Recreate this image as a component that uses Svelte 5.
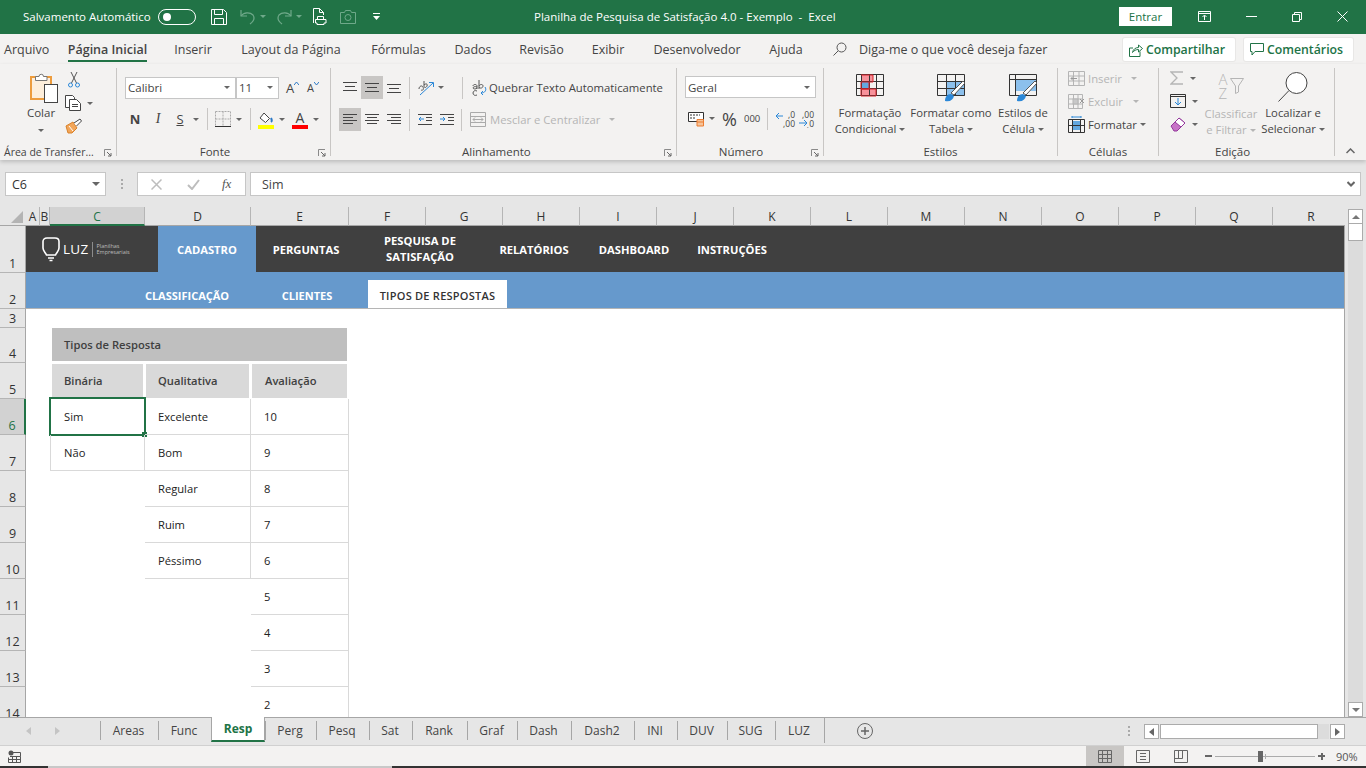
<script>
	const tabs = [
		{ label: 'Arquivo', w: 54 },
		{ label: 'Página Inicial', w: 107, active: true },
		{ label: 'Inserir', w: 64 },
		{ label: 'Layout da Página', w: 132 },
		{ label: 'Fórmulas', w: 83 },
		{ label: 'Dados', w: 66 },
		{ label: 'Revisão', w: 71 },
		{ label: 'Exibir', w: 62 },
		{ label: 'Desenvolvedor', w: 116 },
		{ label: 'Ajuda', w: 62 }
	];

	const columns = [
		{ l: 'A', w: 14 }, { l: 'B', w: 10 }, { l: 'C', w: 95, sel: true }, { l: 'D', w: 106 }, { l: 'E', w: 98 },
		...'FGHIJKLMNOPQR'.split('').map((l) => ({ l, w: 77 }))
	];

	const rows = [47, 36, 19, 35, 36, 36, 36, 36, 36, 36, 36, 36, 36, 36];

	const navItems = [
		{ label: 'CADASTRO', w: 98, active: true },
		{ label: 'PERGUNTAS', w: 100 },
		{ label: 'PESQUISA DE SATISFAÇÃO', w: 128, wrap: true },
		{ label: 'RELATÓRIOS', w: 100 },
		{ label: 'DASHBOARD', w: 100 },
		{ label: 'INSTRUÇÕES', w: 96 }
	];

	const binaria = ['Sim', 'Não'];
	const qualitativa = ['Excelente', 'Bom', 'Regular', 'Ruim', 'Péssimo'];
	const avaliacao = [10, 9, 8, 7, 6, 5, 4, 3, 2];

	const sheets = [
		{ n: 'Areas', w: 58 }, { n: 'Func', w: 53 }, { n: 'Resp', w: 54, active: true }, { n: 'Perg', w: 51 },
		{ n: 'Pesq', w: 53 }, { n: 'Sat', w: 43 }, { n: 'Rank', w: 55 }, { n: 'Graf', w: 50 }, { n: 'Dash', w: 54 },
		{ n: 'Dash2', w: 63 }, { n: 'INI', w: 43 }, { n: 'DUV', w: 50 }, { n: 'SUG', w: 48 }, { n: 'LUZ', w: 49 }
	];
</script>

{#snippet launcher()}
	<svg class="launcher" width="8" height="8" viewBox="0 0 8 8"><path d="M.5 7V.5H7" fill="none" stroke="#8a8a8a" /><path d="M3 3l4 4M7 4v3H4" fill="none" stroke="#666" /></svg>
{/snippet}

<div class="app">
	<header class="titlebar">
		<div class="qat">
			<span class="autosave">Salvamento Automático</span>
			<span class="toggle"><i></i></span>
			<svg class="q-save" width="16" height="16" viewBox="0 0 16 16" fill="none" stroke="#fff"><path d="M.5.5h12l3 3v12H.5z" /><path d="M3.5.5v5h8v-5M3.5 15.5v-6h9v6" /></svg>
			<svg class="q-undo" width="16" height="16" viewBox="0 0 16 16" fill="none" stroke="#6fa98a" stroke-width="1.2"><path d="M1 1v6h6" /><path d="M1 7c3-4 9-4 12-1 2 3 1 6-3 9" /></svg>
			<span class="caret dim q-c"></span>
			<svg class="q-redo" width="16" height="16" viewBox="0 0 16 16" fill="none" stroke="#6fa98a" stroke-width="1.2"><path d="M15 1v6H9" /><path d="M15 7C12 3 6 3 3 6c-2 3-1 6 3 9" /></svg>
			<span class="caret dim q-c"></span>
			<svg class="q-print" width="15" height="17" viewBox="0 0 15 17" fill="none" stroke="#fff"><path d="M.5 15V.5h6l4 4V7" /><path d="M6.5.5v4h4" /><path d="M4.5 8.5h6v3h-6zM2.5 11.5h10.5v3.5h-2v1.5h-7V15h-1.5z" fill="#217346" /></svg>
			<svg class="q-cam" width="16" height="14" viewBox="0 0 16 14" fill="none" stroke="#6fa98a"><path d="M.5 2.5h4l1-2h5l1 2h4v11H.5z" /><circle cx="8" cy="7.5" r="3" /></svg>
			<svg class="q-more" width="7" height="7" viewBox="0 0 7 7" fill="#fff"><path d="M0 0h7v1H0zM0 3h7L3.5 7z" /></svg>
		</div>
		<div class="doc-title">Planilha de Pesquisa de Satisfação 4.0 - Exemplo &nbsp;-&nbsp; Excel</div>
		<button class="signin">Entrar</button>
		<div class="winbtns">
			<svg width="13" height="11" viewBox="0 0 13 11" fill="none" stroke="#fff"><path d="M.5.5h12v10H.5zM.5 2.5h12M6.5 9V4.500M4.500 6l2-2 2 2" /></svg>
			<svg width="11" height="1" viewBox="0 0 11 1"><path d="M0 .5h11" stroke="#fff" /></svg>
			<svg width="10" height="10" viewBox="0 0 10 10" fill="none" stroke="#fff"><path d="M.5 2.500h7v7h-7zM2.500 2.500v-2h7v7h-2" /></svg>
			<svg width="11" height="11" viewBox="0 0 11 11" fill="none" stroke="#fff"><path d="M.5.500l10 10M10.500.500l-10 10" /></svg>
		</div>
	</header>

	<nav class="tabrow">
		{#each tabs as t}
			<span class="tab" class:active={t.active} style="width:{t.w}px"><span>{t.label}</span></span>
		{/each}
		<svg class="search" width="14" height="14" viewBox="0 0 14 14" fill="none" stroke="#555"><circle cx="8.500" cy="5.500" r="4.500" /><path d="M5 9l-4.500 4.500" /></svg>
		<span class="tell">Diga-me o que você deseja fazer</span>
		<button class="pill share">
			<svg width="14" height="14" viewBox="0 0 14 14" fill="none" stroke="#217346"><path d="M11 8.500v5H.5V5H4" /><path d="M3.500 9.500C4 6 7 4.500 9.500 4.500V2l4 3.500-4 3.500V6.500C7 6.500 5 7.500 3.500 9.500z" /></svg>
			Compartilhar
		</button>
		<button class="pill comment">
			<svg width="14" height="13" viewBox="0 0 14 13" fill="none" stroke="#217346"><path d="M.5.500h13v8H5l-3 3.500v-3.500H.5z" /></svg>
			Comentários
		</button>
	</nav>

	<section class="ribbon">
		<div class="group g-clip">
			<div class="body clip-body">
				<div class="paste">
					<svg width="28" height="32" viewBox="0 0 28 32"><rect x="1" y="5" width="20" height="22" fill="#fdeedb" stroke="#ed9c3d" stroke-width="2" /><path d="M5.500 8.500v-4h3.500a2.200 2.200 0 0 1 4.500 0h3.500v4z" fill="#fff" stroke="#777" /><rect x="14.500" y="12.500" width="13" height="18" fill="#fff" stroke="#444" /></svg>
					<span class="lbl">Colar</span>
					<span class="caret"></span>
				</div>
				<div class="clip-tools">
					<svg class="i-cut" width="12" height="16" viewBox="0 0 12 16" fill="none"><path d="M3 0l5.500 11M9 0L3.500 11" stroke="#555" /><circle cx="2.500" cy="13" r="2" stroke="#2b88d8" /><circle cx="9.500" cy="13" r="2" stroke="#2b88d8" /></svg>
					<div class="withcaret">
						<svg width="16" height="16" viewBox="0 0 16 16" fill="#fff" stroke="#444"><path d="M.5.500h7l2 2v10H.5z" /><path d="M4.500 4.500h7l4 4v7h-11z" /><path d="M7 9.500h6M7 11.500h6" /></svg>
						<span class="caret"></span>
					</div>
					<svg width="17" height="16" viewBox="0 0 17 16"><path d="M1 8l7-4 4 6-5 5H3z" fill="#f2a65a" stroke="#d9822b" /><path d="M4 8l4 5" stroke="#fff" /><path d="M9 5l6-4 1.500 2-5 5" fill="#fff" stroke="#444" /></svg>
				</div>
			</div>
			<div class="glabel gl-clip"><span>Área de Transfer...</span>{@render launcher()}</div>
		</div>
		<div class="sep"></div>

		<div class="group g-font">
			<div class="body font-body">
				<div class="frow">
					<div class="select s-font"><span>Calibri</span><span class="caret"></span></div>
					<div class="select s-size"><span>11</span><span class="caret"></span></div>
					<span class="grow-a">A<svg width="5" height="3" viewBox="0 0 5 3"><path d="M0 3l2.500-3L5 3" fill="none" stroke="#2b78c5" /></svg></span>
					<span class="grow-a small">A<svg width="5" height="3" viewBox="0 0 5 3"><path d="M0 0l2.500 3L5 0" fill="none" stroke="#2b78c5" /></svg></span>
				</div>
				<div class="frow second">
					<b class="fmt">N</b>
					<i class="fmt it">I</i>
					<u class="fmt und">S</u>
					<span class="caret c-s"></span>
					<span class="vsep v-a"></span>
					<svg class="i-border" width="16" height="16" viewBox="0 0 16 16" fill="none" stroke="#aaa" stroke-dasharray="2 1"><path d="M.5.500h15v15M.5.500v15M8 .500v15M.5 8h15" /><path d="M0 15.500h16" stroke="#333" stroke-dasharray="none" /></svg>
					<span class="caret c-b"></span>
					<span class="vsep v-b"></span>
					<div class="colorbtn c-fill">
						<svg width="14" height="13" viewBox="0 0 14 13" fill="none"><path d="M5 1l5.500 5.500-4 4L1 6z" stroke="#444" fill="#fff" /><path d="M12 6c1 2 1.500 3 0 4" stroke="#2b78c5" stroke-width="2" /></svg>
						<span class="bar yellow"></span>
					</div>
					<span class="caret c-f"></span>
					<div class="colorbtn c-color">
						<span class="fc-a">A</span>
						<span class="bar red"></span>
					</div>
					<span class="caret c-f2"></span>
				</div>
			</div>
			<div class="glabel gl-font"><span>Fonte</span>{@render launcher()}</div>
		</div>
		<div class="sep"></div>

		<div class="group g-align">
			<div class="body align-body">
				<div class="arow">
					<span class="albtn">
						<svg width="14" height="11" viewBox="0 0 14 11" stroke="#444"><path d="M0 .500h14M2 4.500h10M0 8.500h14" opacity="1" /></svg>
					</span>
					<span class="albtn on">
						<svg width="14" height="11" viewBox="0 0 14 11" stroke="#444"><path d="M0 1.500h14M2 5.500h10M0 9.500h14" /></svg>
					</span>
					<span class="albtn">
						<svg width="14" height="11" viewBox="0 0 14 11" stroke="#444"><path d="M0 2.500h14M2 6.500h10M0 10.500h14" /></svg>
					</span>
					<span class="vsep a-v1"></span>
					<svg class="i-orient" width="17" height="16" viewBox="0 0 17 16" fill="none"><path d="M1 9c0-3 3-4 4-2s0 4-2 3M6 6V1m0 4c2-2 4-1 3 1s-3 2-3 0" stroke="#555" /><path d="M2 15L15 3M11 2.500h4.500V7" stroke="#2b88d8" /></svg>
					<span class="caret c-or"></span>
					<span class="vsep a-v2"></span>
					<svg class="i-wrap" width="15" height="16" viewBox="0 0 15 16" fill="none"><path d="M1 6c0-2 4-2 4 0v3M5 7C3 6 1 7 1 8s3 1.500 4 0M7 0v9m0-3c1-2 4-2 4 0s-3 3-4 1M5 11c-2-1-4 0-4 2s2 3 4 2" stroke="#555" /><path d="M13 7c2 3 0 6-4 6M11 11l-2 2 2 2" stroke="#2b88d8" /></svg>
					<span class="atext">Quebrar Texto Automaticamente</span>
				</div>
				<div class="arow second">
					<span class="albtn on">
						<svg width="14" height="11" viewBox="0 0 14 11" stroke="#444"><path d="M0 .500h14M0 3.500h10M0 6.500h14M0 9.500h10" /></svg>
					</span>
					<span class="albtn">
						<svg width="14" height="11" viewBox="0 0 14 11" stroke="#444"><path d="M0 .500h14M2 3.500h10M0 6.500h14M2 9.500h10" /></svg>
					</span>
					<span class="albtn">
						<svg width="14" height="11" viewBox="0 0 14 11" stroke="#444"><path d="M0 .500h14M4 3.500h10M0 6.500h14M4 9.500h10" /></svg>
					</span>
					<span class="vsep a-v3"></span>
					<svg class="i-ind1" width="14" height="11" viewBox="0 0 14 11" fill="none"><path d="M0 .500h14M8 3.500h6M8 6.500h6M0 10.500h14" stroke="#444" /><path d="M6 5H1M3 3L1 5l2 2" stroke="#2b88d8" /></svg>
					<svg class="i-ind2" width="14" height="11" viewBox="0 0 14 11" fill="none"><path d="M0 .500h14M8 3.500h6M8 6.500h6M0 10.500h14" stroke="#444" /><path d="M0 5h5M3 3l2 2-2 2" stroke="#2b88d8" /></svg>
					<span class="vsep a-v4"></span>
					<svg class="i-merge" width="16" height="15" viewBox="0 0 16 15" fill="none" stroke="#aaa"><path d="M.5.500h15v14H.5zM.5 4.500h15M.5 10.500h15M3 7.500h10M5 5.500l-2 2 2 2M11 5.500l2 2-2 2" /></svg>
					<span class="atext dimmed">Mesclar e Centralizar</span>
					<span class="caret dimc c-m"></span>
				</div>
			</div>
			<div class="glabel gl-align"><span>Alinhamento</span>{@render launcher()}</div>
		</div>
		<div class="sep"></div>

		<div class="group g-num">
			<div class="body num-body">
				<div class="select s-num"><span>Geral</span><span class="caret"></span></div>
				<div class="nrow">
					<svg class="i-acc" width="16" height="17" viewBox="0 0 16 17" fill="none"><path d="M.5 2.500h15v9H.5z" stroke="#333" fill="#fff" /><path d="M2 5h10M2 8h6" stroke="#333" stroke-dasharray="2 1" /><path d="M9 9.500h6.500v6.500H9z" fill="#f6c49a" stroke="#ed7d31" /><path d="M9 12h6.500" stroke="#ed7d31" /></svg>
					<span class="caret c-acc"></span>
					<span class="pct">%</span>
					<span class="thou">000</span>
					<span class="vsep n-v"></span>
					<span class="dec">
						<svg width="8" height="16" viewBox="0 0 8 16" fill="none"><path d="M8 5H1M4 2L1 5l3 3" stroke="#2b88d8" /></svg>
						<span class="dec-text"><span>,0</span><span>,00</span></span>
					</span>
					<span class="dec d2">
						<span class="dec-text right"><span>,00</span><span>,0</span></span>
						<svg class="over" width="10" height="8" viewBox="0 0 10 8" fill="none"><path d="M0 4h8M5 1l3 3-3 3" stroke="#2b88d8" /></svg>
					</span>
				</div>
			</div>
			<div class="glabel gl-num"><span>Número</span>{@render launcher()}</div>
		</div>
		<div class="sep"></div>

		<div class="group g-styles">
			<div class="body styles-body">
				<div class="bigbtn b-cond">
					<svg width="28" height="28" viewBox="0 0 28 28" fill="none"><rect x="5" y="1" width="12" height="7" fill="#f7919a" /><rect x="5" y="15" width="15" height="7" fill="#f7919a" /><rect x="5" y="8" width="8" height="7" fill="#63a8e0" /><path d="M.5.500h27v21h-27zM.5 7.500h27M.5 14.500h27M5.500.500v21M13.500.500v21M20.500.500v21" stroke="#333" /><path d="M5 8h12M5 1h12v7M5 15h15v7H5zM5 8v7h8V8" stroke="#d8232a" /></svg>
					<span class="lbl">Formatação<br />Condicional<i class="caret inl"></i></span>
				</div>
				<div class="bigbtn b-table">
					<svg width="28" height="28" viewBox="0 0 28 28" fill="none"><rect x="10" y="8" width="18" height="14" fill="#8cc0ec" /><path d="M.5.500h27v21h-27zM.5 7.500h27M.5 14.500h27M9.500.500v21M18.500.500v21" stroke="#333" /><path d="M14 19l12-12 2 2-11 12z" fill="#fff" stroke="#555" /><path d="M8 27c0-4 2-7 6-7l3 2c-1 4-4 6-9 5z" fill="#2b88d8" /></svg>
					<span class="lbl">Formatar como<br />Tabela<i class="caret inl"></i></span>
				</div>
				<div class="bigbtn b-cell">
					<svg width="28" height="28" viewBox="0 0 28 28" fill="none"><rect x="6" y="5" width="21" height="12" fill="#8cc0ec" /><path d="M.5.500h27v21h-27zM.5 5.500h27M6.500.500v21" stroke="#333" /><path d="M14 19l12-12 2 2-11 12z" fill="#fff" stroke="#555" /><path d="M8 27c0-4 2-7 6-7l3 2c-1 4-4 6-9 5z" fill="#2b88d8" /></svg>
					<span class="lbl">Estilos de<br />Célula<i class="caret inl"></i></span>
				</div>
			</div>
			<div class="glabel"><span>Estilos</span></div>
		</div>
		<div class="sep"></div>

		<div class="group g-cells">
			<div class="body cells-body">
				<div class="crow dimmed">
					<svg width="17" height="15" viewBox="0 0 17 15" fill="none" stroke="#b5b5b5"><path d="M.5.500h16v14H.5zM.5 5h16M.5 10h16M5.500.500v14M11 .500v14" /><path d="M9 7.500H3M5 5.500l-2 2 2 2" stroke="#999" /></svg>
					<span class="ctext">Inserir</span><span class="caret dimc c-ins"></span>
				</div>
				<div class="crow dimmed">
					<svg width="17" height="15" viewBox="0 0 17 15" fill="none" stroke="#b5b5b5"><path d="M.5.500h14v14H.5zM.5 5h14M.5 10h14M5.500.500v14M10 .500v14" /><rect x="5" y="5" width="5" height="5" fill="#c8c8c8" /><path d="M12 5l4 4M16 5l-4 4" stroke="#999" /></svg>
					<span class="ctext">Excluir</span><span class="caret dimc c-exc"></span>
				</div>
				<div class="crow">
					<svg width="17" height="17" viewBox="0 0 17 17" fill="none"><rect x="4" y="5" width="9" height="9" fill="#63a8e0" /><path d="M.5 3.500h16v13H.5zM.5 9.500h16M4.500 3.500v13M12.500 3.500v13" stroke="#333" /><path d="M4 1h9M4 0v2M13 0v2" stroke="#2b88d8" /></svg>
					<span class="ctext">Formatar</span><span class="caret c-fmt"></span>
				</div>
			</div>
			<div class="glabel"><span>Células</span></div>
		</div>
		<div class="sep"></div>

		<div class="group g-edit">
			<div class="body edit-body">
				<div class="edit-tools">
					<div class="withcaret">
						<svg width="14" height="14" viewBox="0 0 14 14" fill="none" stroke="#b5b5b5" stroke-width="1.300"><path d="M13 1H1l6 6-6 6h12" /></svg>
						<span class="caret"></span>
					</div>
					<div class="withcaret">
						<svg width="16" height="14" viewBox="0 0 16 14" fill="none"><path d="M.5.500h15v13H.5z" stroke="#333" /><path d="M.5 2.500h15" stroke="#333" /><path d="M8 4v7M5 8l3 3 3-3" stroke="#2b88d8" /></svg>
						<span class="caret"></span>
					</div>
					<div class="withcaret">
						<svg width="16" height="15" viewBox="0 0 16 15"><path d="M1 9l8-8 6 5-8 8H4z" fill="#c774c7" stroke="#93379b" /><path d="M5 5l6 5 4-4-6-5z" fill="#fff" stroke="#93379b" /></svg>
						<span class="caret"></span>
					</div>
				</div>
				<div class="bigbtn b-sort dimmed">
					<div class="sort-ic">
						<span class="az"><span>A</span><span>Z</span></span>
						<svg width="14" height="16" viewBox="0 0 14 16" fill="none" stroke="#b5b5b5"><path d="M.5 .500h13L8.500 8v6l-3 1.500V8z" /></svg>
					</div>
					<span class="lbl">Classificar<br />e Filtrar<i class="caret inl dimc"></i></span>
				</div>
				<div class="bigbtn b-find">
					<svg width="30" height="30" viewBox="0 0 30 30" fill="none" stroke="#444"><circle cx="18.500" cy="11" r="10.500" fill="#fff" /><path d="M11 18.500L.500 29.500" /></svg>
					<span class="lbl">Localizar e<br />Selecionar<i class="caret inl"></i></span>
				</div>
			</div>
			<div class="glabel gl-edit"><span>Edição</span></div>
		</div>
		<div class="sep"></div>
		<svg class="collapse" width="9" height="6" viewBox="0 0 9 6" fill="none"><path d="M.5 5l4-4 4 4" stroke="#666" stroke-width="1.500" /></svg>
	</section>

	<section class="formula">
		<div class="namebox"><span>C6</span><span class="caret big"></span></div>
		<span class="dots"><i></i><i></i><i></i></span>
		<div class="fxbtns">
			<svg width="11" height="11" viewBox="0 0 11 11" fill="none" stroke="#bdbdbd" stroke-width="1.500"><path d="M.500.500l10 10M10.500.500l-10 10" /></svg>
			<svg width="13" height="11" viewBox="0 0 13 11" fill="none" stroke="#bdbdbd" stroke-width="2"><path d="M1 6l4 4 7-9" /></svg>
			<span class="fx">fx</span>
		</div>
		<div class="fxinput">
			<span>Sim</span>
			<svg width="8" height="6" viewBox="0 0 8 6" fill="none" stroke="#666" stroke-width="2"><path d="M.5 1L4 4.500 7.500 1" /></svg>
		</div>
	</section>

	<div class="workarea">
		<div class="workmain">
			<div class="colheads">
				<div class="corner"><svg width="12" height="12" viewBox="0 0 12 12"><path d="M12 0v12H0z" fill="#b4b4b4" /></svg></div>
				{#each columns as c}
					<span class="colhead" class:sel={c.sel} style="width:{c.w}px">{c.l}</span>
				{/each}
			</div>

			<section class="grid">
				<div class="rowheads">
					{#each rows as h, i}
						<div class="rowhead" class:sel={i === 5} style="height:{h}px">{i + 1}</div>
					{/each}
				</div>

				<div class="sheet">
					<div class="nav">
						<div class="logo">
							<svg width="20" height="26" viewBox="0 0 20 26" fill="none" stroke="#fff" stroke-width="1.600"><path d="M6 2h8c2.500 0 4 1.500 4 3.500V12c0 3-2.500 4.500-3.500 7h-9C4.500 16.500 2 15 2 12V5.500C2 3.500 3.500 2 6 2z" /><path d="M7 22h6M8.500 24.500h3" /></svg>
							<span class="luz">LUZ</span>
							<span class="logo-sep"></span>
							<span class="logo-sub">Planilhas<br />Empresariais</span>
						</div>
						{#each navItems as n}
							<span class="navitem" class:active={n.active} class:wrap={n.wrap} style="width:{n.w}px">{n.label}</span>
						{/each}
					</div>
					<div class="subnav">
						<span class="sub s1">CLASSIFICAÇÃO</span>
						<span class="sub s2">CLIENTES</span>
						<span class="sub s3">TIPOS DE RESPOSTAS</span>
					</div>

					<div class="tbl">
						<div class="tbl-title">Tipos de Resposta</div>
						<div class="cols">
							<div class="col col-c">
								<div class="head">Binária</div>
								{#each binaria as v, i}
									<div class="cell">
										{v}
										{#if i === 0}<span class="selbox"><i></i></span>{/if}
									</div>
								{/each}
							</div>
							<div class="col col-d">
								<div class="head">Qualitativa</div>
								{#each qualitativa as v}<div class="cell">{v}</div>{/each}
							</div>
							<div class="col col-e">
								<div class="head">Avaliação</div>
								{#each avaliacao as v}<div class="cell">{v}</div>{/each}
							</div>
						</div>
					</div>
				</div>
			</section>
		</div>

		<div class="vscroll">
			<span class="sbtn"><i class="tri up"></i></span>
			<span class="vthumb"></span>
			<span class="vfill"></span>
			<span class="sbtn"><i class="tri down"></i></span>
		</div>
	</div>

	<section class="sheetbar">
		<div class="sheetnav">
			<i class="tri left"></i>
			<i class="tri right"></i>
		</div>
		<div class="sheettabs">
			{#each sheets as s}
				<span class="stab" class:active={s.active} style="width:{s.w}px">{s.n}</span>
			{/each}
		</div>
		<svg class="addsheet" width="16" height="16" viewBox="0 0 16 16" fill="none" stroke="#666"><circle cx="8" cy="8" r="7.500" /><path d="M8 4v8M4 8h8" stroke-width="1.500" /></svg>
		<span class="dots bardots"><i></i><i></i><i></i></span>
		<div class="hscroll">
			<span class="sbtn"><i class="tri left dark"></i></span>
			<span class="hthumb"></span>
			<span class="hfill"></span>
			<span class="sbtn"><i class="tri right dark"></i></span>
		</div>
	</section>

	<footer class="status">
		<svg class="macro" width="13" height="13" viewBox="0 0 13 13" fill="none"><circle cx="3" cy="3" r="2.500" fill="#555" /><path d="M2 6.500h10.500v6H.5v-5M.5 9.500h12M4.500 6.500v6M8.500 6.500v6M5 2.500h7.500v4" stroke="#555" /></svg>
		<div class="views">
			<span class="view on"><svg width="14" height="13" viewBox="0 0 14 13" fill="none" stroke="#666"><path d="M.5.500h13v12H.5zM.5 4.500h13M.5 8.500h13M4.500.500v12M9.500.500v12" /></svg></span>
			<span class="view"><svg width="14" height="13" viewBox="0 0 14 13" fill="none" stroke="#666"><path d="M.5.500h13v12H.5zM4 3.500h6M4 6.500h6M4 9.500h6" /></svg></span>
			<span class="view"><svg width="14" height="13" viewBox="0 0 14 13" fill="none" stroke="#666"><path d="M.5.500h13v12H.5zM.5 8.500h8V.500M4.500.500v8" /></svg></span>
		</div>
		<div class="zoomctl">
			<span class="zm minus"></span>
			<div class="slider"><i class="thumb"></i><i class="tick"></i></div>
			<span class="zm plus"></span>
			<span class="zoomval">90%</span>
		</div>
	</footer>
	<div class="strip"><i></i><b></b></div>
</div>

<style>
	:global(body) {
		margin: 0;
		background: #e6e6e6;
		overflow: hidden;
	}

	.app {
		width: 1366px;
		height: 768px;
		display: flex;
		flex-direction: column;
		overflow: hidden;
		font-family: 'Open Sans', 'Noto Sans', sans-serif;
		font-size: 12px;
		color: #444;
	}

	svg {
		display: block;
		flex: none;
	}

	button {
		font: inherit;
		border: none;
		cursor: default;
	}

	.caret {
		display: inline-block;
		flex: none;
		width: 0;
		height: 0;
		border-left: 3px solid transparent;
		border-right: 3px solid transparent;
		border-top: 3px solid #666;
	}

	.caret.dim {
		border-top-color: #6fa98a;
	}

	.caret.dimc {
		border-top-color: #b5b5b5;
	}

	.caret.inl {
		margin-left: 3px;
		vertical-align: 2px;
	}

	.vsep {
		display: block;
		flex: none;
		width: 1px;
		height: 22px;
		background: #c8c6c4;
	}

	/* title bar */
	.titlebar {
		height: 34px;
		flex: none;
		box-sizing: border-box;
		padding-bottom: 1px;
		display: flex;
		align-items: center;
		background: #217346;
		color: #fff;
	}

	.qat {
		width: 534px;
		flex: none;
		display: flex;
		align-items: center;
		padding-left: 23px;
		box-sizing: border-box;
	}

	.autosave {
		width: 135px;
		flex: none;
		font-size: 11.5px;
		white-space: nowrap;
	}

	.toggle {
		width: 38px;
		height: 16px;
		box-sizing: border-box;
		border: 1px solid #fff;
		border-radius: 8px;
		display: flex;
		align-items: center;
		padding-left: 4px;
	}

	.toggle i {
		width: 8px;
		height: 8px;
		border-radius: 50%;
		background: #fff;
	}

	.q-save { margin-left: 15px; }
	.q-undo { margin-left: 13px; }
	.q-redo { margin-left: 10px; }
	.q-c { margin-left: 4px; }
	.q-print { margin-left: 11px; }
	.q-cam { margin-left: 12px; }
	.q-more { margin-left: 17px; }

	.doc-title {
		width: 585px;
		flex: none;
		font-size: 11.5px;
		white-space: nowrap;
	}

	.signin {
		width: 53px;
		height: 19px;
		flex: none;
		padding: 0;
		background: #fff;
		color: #217346;
		font-size: 11.5px;
	}

	.winbtns {
		flex: 1;
		display: flex;
		align-items: center;
		justify-content: space-between;
		padding: 0 18px 0 26px;
	}

	/* ribbon tabs */
	.tabrow {
		height: 30px;
		flex: none;
		display: flex;
		align-items: stretch;
		background: #f3f2f1;
		box-sizing: border-box;
		font-size: 12.500px;
		white-space: nowrap;
	}

	.tab {
		display: flex;
		justify-content: center;
		align-items: flex-start;
		flex: none;
	}

	.tab span {
		height: 26px;
		line-height: 32px;
		box-sizing: content-box;
	}

	.tab:first-child {
		justify-content: flex-start;
		padding-left: 4px;
		box-sizing: border-box;
	}

	.tab.active span {
		font-weight: 600;
		color: #444;
		border-bottom: 2px solid #217346;
	}

	.search {
		margin: 8px 0 0 16px;
	}

	.tell {
		margin: 7px 0 0 12px;
		width: 264px;
		flex: none;
	}

	.pill {
		height: 23px;
		margin-top: 4px;
		padding: 0 4px 0 0;
		background: #fff;
		color: #217346;
		font-size: 12.300px;
		font-weight: 600;
		display: flex;
		align-items: center;
		justify-content: center;
		gap: 3px;
		border-radius: 2px;
		box-shadow: 0 0 0 1px #e8e7e6;
		flex: none;
	}

	.share { width: 112px; }
	.comment { width: 109px; margin-left: 9px; }

	/* ribbon */
	.ribbon {
		height: 96px;
		flex: none;
		display: flex;
		background: #f3f2f1;
		box-shadow: 0 2px 4px rgba(0, 0, 0, 0.18);
		position: relative;
		z-index: 2;
		font-size: 11.500px;
	}

	.sep {
		width: 1px;
		flex: none;
		margin: 4px 0;
		background: #c8c6c4;
	}

	.group {
		flex: none;
		display: flex;
		flex-direction: column;
	}

	.g-clip { width: 116px; }
	.g-font { width: 213px; }
	.g-align { width: 345px; }
	.g-num { width: 146px; }
	.g-styles { width: 233px; }
	.g-cells { width: 100px; }
	.g-edit { width: 175px; }

	.body {
		height: 80px;
		flex: none;
		box-sizing: border-box;
	}

	.glabel {
		height: 16px;
		line-height: 16px;
		display: flex;
		justify-content: center;
		align-items: center;
		white-space: nowrap;
		font-size: 11.500px;
	}

	.glabel span {
		flex: 1;
		text-align: center;
	}

	.launcher {
		margin: 2px 4px 0 0;
	}

	.gl-clip {
		font-size: 10.500px;
	}

	.gl-clip span {
		text-align: left;
		padding-left: 4px;
	}

	.gl-font span { padding-right: 5px; }
	.gl-align span { text-align: left; padding-left: 131px; }
	.gl-num span { padding-right: 6px; }

	/* clipboard */
	.clip-body {
		display: flex;
		padding: 8px 0 0 30px;
	}

	.paste {
		width: 28px;
		display: flex;
		flex-direction: column;
		align-items: center;
	}

	.paste .lbl {
		margin: 1px 6px 0 0;
	}

	.paste .caret {
		margin: 9px 6px 0 0;
	}

	.clip-tools {
		margin-left: 7px;
		display: flex;
		flex-direction: column;
		gap: 7px;
	}

	.i-cut {
		margin-left: 3px;
	}

	.withcaret {
		display: flex;
		align-items: center;
		gap: 6px;
	}

	/* font */
	.font-body {
		padding: 13px 0 0 8px;
	}

	.frow {
		display: flex;
		align-items: center;
		height: 21px;
	}

	.frow.second {
		margin-top: 10px;
		height: 22px;
	}

	.select {
		height: 22px;
		box-sizing: border-box;
		background: #fff;
		border: 1px solid #c6c6c6;
		display: flex;
		align-items: center;
		justify-content: space-between;
		padding: 0 5px 0 2px;
		color: #444;
		font-size: 11.500px;
		flex: none;
	}

	.s-font { width: 111px; }
	.s-size { width: 43px; margin-right: 7px; }
	.s-num { width: 131px; margin-left: 8px; }

	.grow-a {
		display: flex;
		align-items: flex-start;
		font-size: 13px;
		width: 21px;
		line-height: 14px;
	}

	.grow-a svg {
		margin-top: 1px;
	}

	.grow-a.small {
		font-size: 11px;
	}

	.fmt {
		width: 12px;
		text-align: center;
		color: #444;
		font-size: 13px;
		flex: none;
	}

	.fmt:first-child { margin-left: 4px; }
	.it { margin-left: 11px; font-family: 'Liberation Serif', serif; font-size: 14px; }
	.und { margin-left: 10px; text-decoration: underline; }
	.c-s { margin-left: 7px; }
	.v-a { margin-left: 8px; }
	.i-border { margin-left: 7px; }
	.c-b { margin-left: 5px; }
	.v-b { margin-left: 8px; }

	.colorbtn {
		width: 16px;
		flex: none;
		display: flex;
		flex-direction: column;
		align-items: center;
		height: 20px;
		justify-content: flex-end;
	}

	.c-fill { margin-left: 7px; }
	.c-f { margin-left: 5px; }
	.c-color { margin-left: 7px; }
	.c-f2 { margin-left: 5px; }

	.fc-a {
		font-size: 14px;
		line-height: 15px;
	}

	.bar {
		width: 16px;
		height: 4px;
		flex: none;
	}

	.yellow { background: #ffff00; }
	.red { background: #ff0000; }

	/* alignment */
	.align-body {
		padding: 12px 0 0 8px;
	}

	.arow {
		display: flex;
		align-items: center;
		height: 23px;
	}

	.arow.second {
		margin-top: 9px;
	}

	.albtn {
		width: 22px;
		height: 23px;
		display: flex;
		align-items: center;
		justify-content: center;
		flex: none;
	}

	.albtn.on {
		background: #c8c6c4;
	}

	.a-v1, .a-v3 { margin-left: 4px; }
	.i-orient { margin-left: 8px; }
	.c-or { margin-left: 3px; }
	.a-v2 { margin-left: 18px; }
	.i-wrap { margin-left: 9px; }
	.atext { margin-left: 2px; white-space: nowrap; font-size: 11.300px; }
	.i-ind1 { margin-left: 8px; }
	.i-ind2 { margin-left: 8px; }
	.a-v4 { margin-left: 7px; }
	.i-merge { margin-left: 8px; }
	.arow .dimmed { margin-left: 4px; }
	.c-m { margin-left: 9px; }

	.dimmed, .dimmed .lbl {
		color: #b5b5b5;
	}

	/* number */
	.num-body {
		padding-top: 12px;
	}

	.nrow {
		display: flex;
		align-items: center;
		height: 23px;
		margin-top: 9px;
		padding-left: 11px;
	}

	.c-acc { margin-left: 5px; }

	.pct {
		margin-left: 7px;
		font-size: 18px;
		line-height: 20px;
		width: 17px;
	}

	.thou {
		margin-left: 5px;
		font-size: 9.500px;
		width: 17px;
	}

	.n-v { margin-left: 6px; }

	.dec {
		display: flex;
		align-items: center;
		margin-left: 7px;
	}

	.dec.d2 {
		margin-left: 4px;
		position: relative;
	}

	.over {
		position: absolute;
		left: 0;
		bottom: 1px;
		background: #f3f2f1;
	}

	.dec-text {
		display: flex;
		flex-direction: column;
		font-size: 8.500px;
		line-height: 9px;
		align-items: flex-end;
		width: 12px;
	}

	.dec-text.right {
		width: 15px;
	}

	/* styles */
	.styles-body {
		display: flex;
		padding-top: 10px;
	}

	.bigbtn {
		display: flex;
		flex-direction: column;
		align-items: center;
		flex: none;
		white-space: nowrap;
		height: 70px;
	}

	.bigbtn .lbl {
		text-align: center;
		line-height: 15.500px;
		margin-top: 3px;
		font-size: 11.300px;
	}

	.bigbtn .lbl i {
		font-style: normal;
	}

	.b-cond { width: 92px; }
	.b-table { width: 70px; }
	.b-cell { width: 74px; }

	/* cells */
	.cells-body {
		padding: 5px 0 0 10px;
		display: flex;
		flex-direction: column;
		gap: 5px;
	}

	.crow {
		display: flex;
		align-items: center;
		height: 18px;
	}

	.ctext {
		margin-left: 3px;
		font-size: 11.300px;
	}

	.c-ins { margin-left: 9px; }
	.c-exc { margin-left: 10px; }
	.c-fmt { margin-left: 3px; }

	/* editing */
	.edit-body {
		display: flex;
		padding: 7px 0 0 11px;
	}

	.edit-tools {
		width: 34px;
		display: flex;
		flex-direction: column;
		gap: 9px;
		flex: none;
	}

	.b-sort {
		width: 60px;
		margin-left: -3px;
		margin-top: 1px;
	}

	.b-sort .lbl {
		margin-top: 6px;
	}

	.sort-ic {
		display: flex;
		align-items: center;
		gap: 2px;
		height: 28px;
	}

	.az {
		display: flex;
		flex-direction: column;
		font-size: 15px;
		line-height: 14px;
		font-weight: 300;
	}

	.b-find {
		width: 64px;
		padding-top: 1px;
	}

	.b-find .lbl {
		margin-top: 3px;
	}

	.gl-edit span {
		text-align: left;
		padding-left: 56px;
	}

	.collapse {
		margin: 84px 0 0 11px;
	}

	/* formula bar */
	.formula {
		height: 47px;
		flex: none;
		box-sizing: border-box;
		display: flex;
		align-items: flex-start;
		padding: 12px 5px 0;
		background: #e6e6e6;
	}

	.namebox {
		width: 101px;
		height: 24px;
		box-sizing: border-box;
		background: #fff;
		border: 1px solid #c6c6c6;
		display: flex;
		align-items: center;
		justify-content: space-between;
		padding: 0 5px 0 6px;
		font-size: 12.500px;
		color: #333;
		flex: none;
	}

	.caret.big {
		border-left-width: 4px;
		border-right-width: 4px;
		border-top-width: 4px;
	}

	.dots {
		display: flex;
		flex-direction: column;
		gap: 2px;
		width: 2px;
		flex: none;
	}

	.dots i {
		width: 2px;
		height: 2px;
		background: #aaa;
	}

	.formula .dots {
		margin: 7px 14px 0 15px;
	}

	.fxbtns {
		width: 109px;
		height: 24px;
		box-sizing: border-box;
		background: #fff;
		border: 1px solid #c6c6c6;
		display: flex;
		align-items: center;
		gap: 25px;
		padding-left: 13px;
		flex: none;
	}

	.fx {
		font-family: 'Liberation Serif', serif;
		font-style: italic;
		font-size: 13px;
		color: #555;
		margin-left: -3px;
	}

	.fxinput {
		width: 1111px;
		height: 24px;
		margin-left: 4px;
		box-sizing: border-box;
		background: #fff;
		border: 1px solid #c6c6c6;
		display: flex;
		align-items: center;
		justify-content: space-between;
		padding: 0 5px 0 11px;
		font-size: 12.500px;
		flex: none;
	}

	/* column headers and grid */
	.workarea {
		height: 510px;
		flex: none;
		display: flex;
	}

	.workmain {
		width: 1345px;
		flex: none;
		display: flex;
		flex-direction: column;
		overflow: hidden;
	}

	.colheads {
		height: 19px;
		flex: none;
		display: flex;
		background: #e6e6e6;
		color: #333;
	}

	.corner {
		width: 26px;
		flex: none;
		display: flex;
		justify-content: flex-end;
		align-items: flex-end;
		padding: 0 3px 2px 0;
		box-sizing: border-box;
		border-bottom: 1px solid #a6a6a6;
	}

	.colhead {
		flex: none;
		box-sizing: border-box;
		border-right: 1px solid #b5b5b5;
		border-bottom: 1px solid #a6a6a6;
		text-align: center;
		line-height: 19px;
		font-size: 12px;
		height: 19px;
	}

	.colhead.sel {
		background: #d2d2d2;
		border-bottom: 2px solid #217346;
		color: #217346;
	}

	.grid {
		height: 491px;
		flex: none;
		display: flex;
		overflow: hidden;
	}

	.rowheads {
		width: 26px;
		flex: none;
		background: #e6e6e6;
		color: #333;
	}

	.rowhead {
		box-sizing: border-box;
		display: flex;
		align-items: flex-end;
		justify-content: center;
		border-bottom: 1px solid #b5b5b5;
		border-right: 1px solid #a6a6a6;
		font-size: 12.500px;
		line-height: 17px;
		overflow: hidden;
	}

	.rowhead.sel {
		background: #d2d2d2;
		color: #217346;
		border-right: 2px solid #217346;
	}

	.sheet {
		width: 1319px;
		flex: none;
		box-sizing: border-box;
		background: #fff;
		overflow: hidden;
		color: #333;
		border-right: 1px solid #a6a6a6;
	}

	.nav {
		height: 46px;
		display: flex;
		background: #404040;
		color: #fff;
		font-weight: 700;
		font-size: 11.200px;
	}

	.logo {
		width: 132px;
		flex: none;
		display: flex;
		align-items: center;
		padding-left: 15px;
		box-sizing: border-box;
		font-weight: 400;
	}

	.luz {
		font-size: 13.500px;
		margin-left: 2px;
		letter-spacing: 0.3px;
	}

	.logo-sep {
		width: 1px;
		height: 15px;
		background: #8c8c8c;
		margin: 0 4px 0 3px;
	}

	.logo-sub {
		font-size: 5.500px;
		line-height: 6px;
		color: #bdbdbd;
	}

	.navitem {
		display: flex;
		align-items: center;
		justify-content: center;
		text-align: center;
		flex: none;
		white-space: nowrap;
		box-sizing: border-box;
	}

	.navitem.wrap {
		white-space: normal;
		line-height: 16px;
		padding: 0 10px;
	}

	.navitem.active {
		background: #6699cc;
	}

	.subnav {
		height: 37px;
		box-sizing: border-box;
		background: #6699cc;
		border-bottom: 1px solid #b5b5b5;
		display: flex;
		align-items: flex-end;
		color: #fff;
		font-weight: 700;
		font-size: 11px;
	}

	.sub {
		height: 28px;
		padding-top: 3px;
		box-sizing: border-box;
		display: flex;
		align-items: center;
		justify-content: center;
		white-space: nowrap;
		flex: none;
	}

	.s1 { width: 120px; margin-left: 101px; }
	.s2 { width: 60px; margin-left: 30px; }
	.s3 { width: 139px; margin-left: 31px; background: #fff; color: #333; font-weight: 600; letter-spacing: 0.25px; }

	.tbl {
		margin: 19px 0 0 24px;
		font-size: 11.200px;
	}

	.tbl-title {
		width: 295px;
		height: 33px;
		margin-left: 2px;
		padding-left: 12px;
		box-sizing: border-box;
		background: #bfbfbf;
		display: flex;
		align-items: center;
		font-weight: 600;
		color: #404040;
	}

	.cols {
		display: flex;
		margin-top: 3px;
	}

	.col {
		flex: none;
		box-sizing: border-box;
	}

	.col-c { width: 95px; }
	.col-d { width: 106px; }
	.col-e { width: 98px; }

	.head {
		height: 34px;
		margin-bottom: 1px;
		background: #d9d9d9;
		display: flex;
		align-items: center;
		font-weight: 600;
		color: #404040;
		padding: 0 0 2px 12px;
		box-sizing: border-box;
	}

	.col-c .head { margin-left: 2px; width: 91px; }
	.col-d .head { margin-left: 1px; width: 103px; }
	.col-e .head { margin-left: 1px; width: 95px; padding-left: 13px; }

	.cell {
		height: 36px;
		box-sizing: border-box;
		border-bottom: 1px solid #d9d9d9;
		border-right: 1px solid #d9d9d9;
		display: flex;
		align-items: center;
		padding-left: 13px;
		position: relative;
		color: #222;
	}

	.col-c .cell {
		border-left: 1px solid #d9d9d9;
	}

	.selbox {
		position: absolute;
		left: -2px;
		top: -2px;
		width: 97px;
		height: 39px;
		box-sizing: border-box;
		border: 2px solid #217346;
	}

	.selbox i {
		position: absolute;
		right: -3px;
		bottom: -3px;
		width: 5px;
		height: 5px;
		background: #217346;
	}

	/* scrollbars */
	.vscroll {
		width: 21px;
		flex: none;
		box-sizing: border-box;
		background: #e6e6e6;
		display: flex;
		flex-direction: column;
		padding: 2px 0 0 3px;
	}

	.sbtn {
		width: 15px;
		height: 15px;
		box-sizing: border-box;
		background: #fff;
		border: 1px solid #ababab;
		display: flex;
		align-items: center;
		justify-content: center;
		flex: none;
	}

	.tri {
		width: 0;
		height: 0;
		display: block;
	}

	.tri.up {
		border: 4px solid transparent;
		border-top: 0;
		border-bottom: 4px solid #777;
	}

	.tri.down {
		border: 4px solid transparent;
		border-bottom: 0;
		border-top: 4px solid #777;
	}

	.tri.left {
		border: 4px solid transparent;
		border-left: 0;
		border-right: 5px solid #c4c4c4;
	}

	.tri.right {
		border: 4px solid transparent;
		border-right: 0;
		border-left: 5px solid #c4c4c4;
	}

	.tri.left.dark { border-right-color: #666; }
	.tri.right.dark { border-left-color: #666; }

	.vthumb {
		width: 15px;
		height: 17px;
		box-sizing: border-box;
		flex: none;
		background: #fff;
		border: 1px solid #ababab;
		border-top: 0;
	}

	.vfill {
		flex: 1;
		width: 15px;
		background: #dcdcdc;
	}

	.sheetbar {
		height: 28px;
		flex: none;
		box-sizing: border-box;
		display: flex;
		background: #e6e6e6;
		border-top: 1px solid #a6a6a6;
		position: relative;
	}

	.sheetnav {
		width: 100px;
		flex: none;
		display: flex;
		align-items: center;
		gap: 24px;
		padding-left: 26px;
		box-sizing: border-box;
		height: 26px;
	}

	.sheettabs {
		display: flex;
		flex: none;
		height: 25px;
		border-right: 1px solid #a6a6a6;
		align-self: flex-start;
	}

	.stab {
		flex: none;
		box-sizing: border-box;
		border-left: 1px solid #a6a6a6;
		margin-top: 3px;
		height: 19px;
		padding-right: 2px;
		display: flex;
		align-items: center;
		justify-content: center;
		font-size: 12px;
		color: #444;
	}

	.stab.active {
		background: #fff;
		color: #217346;
		font-weight: 700;
		border-left: 1px solid #a6a6a6;
		border-right: 1px solid #a6a6a6;
		border-bottom: 2px solid #217346;
		margin-top: -1px;
		height: 25px;
		padding-right: 0;
	}

	.addsheet {
		margin: 5px 0 0 32px;
	}

	.bardots {
		margin: 8px 0 0 255px;
	}

	.hscroll {
		display: flex;
		margin: 6px 0 0 14px;
		height: 15px;
	}

	.hthumb {
		width: 158px;
		height: 15px;
		box-sizing: border-box;
		margin-left: 1px;
		background: #fff;
		border: 1px solid #ababab;
		flex: none;
	}

	.hfill {
		width: 11px;
		background: #dcdcdc;
		flex: none;
		margin-right: 1px;
	}

	/* status bar */
	.status {
		height: 21px;
		flex: none;
		box-sizing: border-box;
		background: #f3f2f1;
		border-top: 1px solid #d0d0d0;
		display: flex;
		align-items: center;
		padding-left: 8px;
	}

	.macro {
		margin-right: 1065px;
	}

	.views {
		display: flex;
		height: 20px;
	}

	.view {
		width: 38px;
		display: flex;
		align-items: center;
		justify-content: center;
		flex: none;
	}

	.view.on {
		background: #c8c6c4;
	}

	.zoomctl {
		display: flex;
		align-items: center;
		margin-left: 5px;
	}

	.zm {
		width: 7px;
		height: 7px;
		flex: none;
		background: linear-gradient(#666, #666) center / 7px 2px no-repeat;
	}

	.zm.plus {
		background:
			linear-gradient(#666, #666) center / 7px 2px no-repeat,
			linear-gradient(#666, #666) center / 2px 7px no-repeat;
	}

	.slider {
		width: 100px;
		height: 1px;
		margin: 0 3px 0 3px;
		background: #ababab;
		position: relative;
	}

	.thumb {
		position: absolute;
		left: 43px;
		top: -5px;
		width: 5px;
		height: 11px;
		background: #666;
	}

	.tick {
		position: absolute;
		left: 50px;
		top: -2px;
		width: 1px;
		height: 5px;
		background: #ababab;
	}

	.zoomval {
		margin-left: 11px;
		font-size: 11px;
		color: #555;
	}

	.strip {
		height: 2px;
		flex: none;
		display: flex;
		background: #333;
	}

	.strip i {
		width: 48px;
		background: #333;
	}

	.strip b {
		width: 344px;
		background: #c8c8c8;
	}
</style>
